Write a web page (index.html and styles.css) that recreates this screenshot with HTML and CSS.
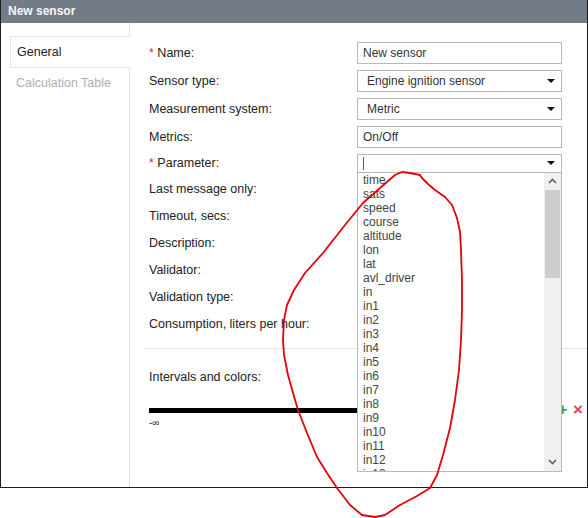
FILE: index.html
```html
<!DOCTYPE html>
<html lang="en">
<head>
    <meta charset="UTF-8">
    <title>New sensor</title>
    <link rel="stylesheet" href="styles.css">
</head>
<body>
    <div class="window">
        <div class="title">New sensor</div>
        <div class="body">
            <div class="tabs">
                <div class="tab active">General</div>
                <div class="tab">Calculation Table</div>
            </div>
            <div class="content">
                <div class="form">
                    <div class="row">
                        <div class="label"><span class="req">*</span> Name:</div>
                        <div class="field">New sensor</div>
                    </div>
                    <div class="row">
                        <div class="label">Sensor type:</div>
                        <div class="field select"><span class="value">Engine ignition sensor</span><span class="caret"></span></div>
                    </div>
                    <div class="row">
                        <div class="label">Measurement system:</div>
                        <div class="field select"><span class="value">Metric</span><span class="caret"></span></div>
                    </div>
                    <div class="row">
                        <div class="label">Metrics:</div>
                        <div class="field">On/Off</div>
                    </div>
                    <div class="row param">
                        <div class="label"><span class="req">*</span> Parameter:</div>
                        <div class="combo">
                            <div class="field combo-input"><span class="cursor"></span><span class="caret"></span></div>
                            <div class="dropdown">
                                <ul class="options">
                                    <li>time</li>
                                    <li>sats</li>
                                    <li>speed</li>
                                    <li>course</li>
                                    <li>altitude</li>
                                    <li>lon</li>
                                    <li>lat</li>
                                    <li>avl_driver</li>
                                    <li>in</li>
                                    <li>in1</li>
                                    <li>in2</li>
                                    <li>in3</li>
                                    <li>in4</li>
                                    <li>in5</li>
                                    <li>in6</li>
                                    <li>in7</li>
                                    <li>in8</li>
                                    <li>in9</li>
                                    <li>in10</li>
                                    <li>in11</li>
                                    <li>in12</li>
                                    <li>in13</li>
                                </ul>
                                <div class="scrollbar">
                                    <div class="sb-btn">
                                        <svg width="9" height="6" viewBox="0 0 9 6"><polyline points="1,5 4.5,1.5 8,5" fill="none" stroke="#606060" stroke-width="1.6"/></svg>
                                    </div>
                                    <div class="sb-thumb"></div>
                                    <div class="sb-track"></div>
                                    <div class="sb-btn">
                                        <svg width="9" height="6" viewBox="0 0 9 6"><polyline points="1,1 4.5,4.5 8,1" fill="none" stroke="#606060" stroke-width="1.6"/></svg>
                                    </div>
                                </div>
                            </div>
                        </div>
                    </div>
                    <div class="row short"><div class="label">Last message only:</div></div>
                    <div class="row short"><div class="label">Timeout, secs:</div></div>
                    <div class="row short"><div class="label">Description:</div></div>
                    <div class="row short"><div class="label">Validator:</div></div>
                    <div class="row short"><div class="label">Validation type:</div></div>
                    <div class="row short"><div class="label">Consumption, liters per hour:</div></div>
                </div>
                <div class="separator"></div>
                <div class="intervals">
                    <div class="label">Intervals and colors:</div>
                    <div class="scale">
                        <div class="bar"></div>
                        <span class="plus">+</span>
                        <span class="remove">&times;</span>
                    </div>
                    <div class="inf">-&infin;</div>
                </div>
            </div>
        </div>
    </div>

    <!-- hand drawn marker around the list -->
    <svg class="annotation" width="588" height="518" viewBox="0 0 588 518">
        <polyline fill="none" stroke="#e3000b" stroke-width="1.8" stroke-linejoin="round" stroke-linecap="round"
            points="422,178 420,175 410,173 402,172 395,175 380,188 363,203 345,225 323,253 305,273 294,290 287,305 284,320 283,340 284,355 288,375 293,393 298,410 307,433 317,457 327,473 337,488 350,505 362,515 375,517 385,515 400,505 417,496 430,488 437,475 443,455 450,428 455,400 459,370 461,340 462,310 462,280 461,250 460,232 457,218 452,205 445,197 435,190 428,184 422,178"/>
    </svg>
</body>
</html>
```

FILE: styles.css
```css
body {
  margin: 0;
  background-color: #fff;
  font-family: "Liberation Sans", Arial, sans-serif;
  font-size: 12px;
  color: #222;
}
.window {
  width: 586px;
  height: 487px;
  border: 1px solid #1e1e1e;
  border-top: none;
  display: flex;
  flex-direction: column;
}
.title {
  height: 23px;
  line-height: 23px;
  padding-left: 7px;
  background-color: #747b88;
  color: #f6f6f6;
  font-weight: bold;
  font-size: 12px;
}
.body {
  flex: 1;
  display: flex;
}
/* Tabs */
.tabs {
  width: 128px;
  border-right: 1px solid #e3e3e3;
  padding-top: 13px;
}
.tab {
  height: 30px;
  line-height: 30px;
  margin-left: 9px;
  padding-left: 6px;
  color: #b0b0b0;
  font-size: 12.5px;
}
.tab.active {
  color: #222;
  background-color: #fff;
  border: 1px solid #e3e3e3;
  border-right: none;
  margin-right: -1px;
  height: 30px;
}
/* Form */
.content {
  flex: 1;
  padding-top: 16px;
}
.form {
  padding-left: 19px;
}
.row {
  height: 28px;
  display: flex;
  align-items: center;
}
.row.param {
  height: 24px;
}
.row.short {
  height: 27px;
}
.label {
  width: 208px;
  font-size: 12.5px;
}
.req {
  color: #d93030;
}
.field {
  width: 194px;
  height: 20px;
  line-height: 20px;
  border: 1px solid #b9b9b9;
  padding-left: 5px;
  padding-right: 4px;
  color: #333;
  display: flex;
  align-items: center;
}
.select {
  padding-left: 9px;
  width: 190px;
}
.value {
  flex: 1;
}
.caret {
  width: 0;
  height: 0;
  border-left: 4px solid transparent;
  border-right: 4px solid transparent;
  border-top: 4px solid #111;
  margin-right: 2px;
}
.combo {
  position: relative;
}
.combo-input {
  height: 17px;
}
.cursor {
  flex: 1;
  height: 13px;
  border-left: 1px solid #c22;
}
.dropdown {
  position: absolute;
  left: 0;
  top: 18px;
  width: 203px;
  height: 298px;
  background-color: #fff;
  border: 1px solid #b9b9b9;
  display: flex;
  z-index: 2;
}
.options {
  flex: 1;
  margin: 0;
  padding: 0 0 0 5px;
  list-style: none;
  overflow: hidden;
  color: #444;
}
.options li {
  height: 14px;
  line-height: 14px;
}
.scrollbar {
  width: 17px;
  display: flex;
  flex-direction: column;
  background-color: #f0f0f0;
}
.sb-btn {
  height: 17px;
  display: flex;
  align-items: center;
  justify-content: center;
}
.sb-thumb {
  height: 88px;
  margin: 0 1px;
  background-color: #cdcdcd;
}
.sb-track {
  flex: 1;
}
/* Intervals */
.separator {
  margin: 11px 0 0 14px;
  border-top: 1px solid #e3e3e3;
}
.intervals {
  padding-left: 19px;
  padding-top: 21px;
}
.intervals .label {
  line-height: 14px;
}
.scale {
  display: flex;
  align-items: center;
  height: 14px;
  margin-top: 19px;
}
.bar {
  flex: 1;
  height: 5px;
  background-color: #000;
}
.plus {
  width: 12px;
  margin-left: 0;
  color: #3aa052;
  font-size: 16px;
  font-weight: bold;
  line-height: 14px;
}
.remove {
  width: 14px;
  margin-left: 3px;
  color: #e04848;
  font-size: 17px;
  font-weight: bold;
  line-height: 14px;
}
.inf {
  font-size: 10px;
  line-height: 10px;
  margin-top: 1px;
  color: #333;
}
.annotation {
  position: absolute;
  top: 0;
  left: 0;
  pointer-events: none;
  z-index: 5;
}
```
